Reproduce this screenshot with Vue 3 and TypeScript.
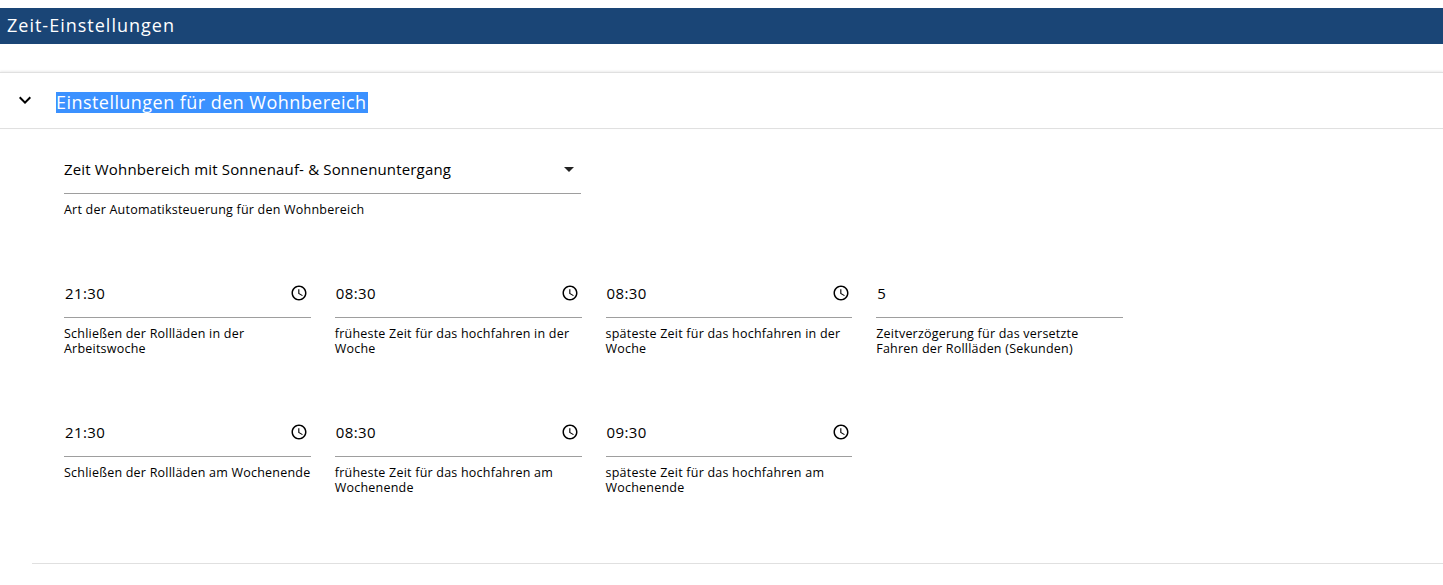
<script setup lang="ts">
interface Field { value: string; label: string; clock: boolean }
const rows: Field[][] = [
  [
    { value: '21:30', label: 'Schließen der Rollläden in der Arbeitswoche', clock: true },
    { value: '08:30', label: 'früheste Zeit für das hochfahren in der Woche', clock: true },
    { value: '08:30', label: 'späteste Zeit für das hochfahren in der Woche', clock: true },
    { value: '5', label: 'Zeitverzögerung für das versetzte Fahren der Rollläden (Sekunden)', clock: false },
  ],
  [
    { value: '21:30', label: 'Schließen der Rollläden am Wochenende', clock: true },
    { value: '08:30', label: 'früheste Zeit für das hochfahren am Wochenende', clock: true },
    { value: '09:30', label: 'späteste Zeit für das hochfahren am Wochenende', clock: true },
  ],
]
</script>

<template>
  <div class="page">
    <h1 class="title">Zeit-Einstellungen</h1>
    <section class="panel">
      <div class="panel-head">
        <svg class="chevron" width="24" height="24" viewBox="0 0 24 24" aria-hidden="true">
          <path d="M16.59 8.59 12 13.17 7.41 8.59 6 10l6 6 6-6z" fill="#000" />
        </svg>
        <span class="panel-title">Einstellungen für den Wohnbereich</span>
      </div>
      <div class="panel-body">
        <div class="select-field">
          <div class="select-value">
            <span>Zeit Wohnbereich mit Sonnenauf- &amp; Sonnenuntergang</span>
            <i class="arrow"></i>
          </div>
          <div class="hint">Art der Automatiksteuerung für den Wohnbereich</div>
        </div>
        <div v-for="(row, r) in rows" :key="r" class="grid">
          <div v-for="(f, i) in row" :key="i" class="field">
            <div class="field-value">
              <span>{{ f.value }}</span>
              <svg v-if="f.clock" class="clock" width="18" height="18" viewBox="0 0 24 24" aria-hidden="true">
                <path fill="#000" d="M11.99 2C6.47 2 2 6.48 2 12s4.47 10 9.99 10C17.52 22 22 17.52 22 12S17.52 2 11.99 2zM12 20c-4.42 0-8-3.58-8-8s3.58-8 8-8 8 3.58 8 8-3.58 8-8 8z" />
                <path fill="#000" d="M12.5 7H11v6l5.25 3.15.75-1.23-4.5-2.67z" />
              </svg>
            </div>
            <div class="hint">{{ f.label }}</div>
          </div>
        </div>
      </div>
    </section>
    <div class="bottom-rule"></div>
  </div>
</template>

<style>
html, body { margin: 0; background: #fff; overflow: hidden; }
</style>

<style scoped>
.page {
  height: 585px;
  padding-top: 8px;
  box-sizing: border-box;
  font-family: "Open Sans", "Noto Sans", sans-serif;
  color: #000;
}
.title {
  margin: 0;
  height: 36px;
  padding-left: 7px;
  background: #1a4576;
  color: #fff;
  font-size: 18px;
  font-weight: 400;
  line-height: 35px;
  letter-spacing: 1px;
}
.panel { margin-top: 28px; }
.panel-head {
  display: flex;
  align-items: center;
  height: 57px;
  box-sizing: border-box;
  border-top: 1px solid #e0e0e0;
  border-bottom: 1px solid #e0e0e0;
  box-shadow: 0 -1px 2px rgba(0, 0, 0, 0.08);
  padding-left: 12.5px;
}
.chevron { flex: none; margin-top: -1px; }
.panel-title {
  margin: 4px 0 0 19.5px;
  padding: 0 1px 0 0;
  background: #3b91ff;
  color: #fff;
  font-size: 18px;
  line-height: 21px;
  letter-spacing: 0.45px;
}
.panel-body { padding: 20px 0 0 64px; }
.select-field { width: 517px; height: 120px; }
.select-value {
  display: flex;
  align-items: center;
  justify-content: space-between;
  height: 45px;
  border-bottom: 1px solid #9e9e9e;
  font-size: 15px;
  letter-spacing: 0.16px;
  padding-bottom: 4px;
  box-sizing: border-box;
}
.arrow {
  width: 0;
  height: 0;
  margin-right: 7px;
  border-left: 5px solid transparent;
  border-right: 5px solid transparent;
  border-top: 5px solid #222;
}
.hint {
  margin-top: 8px;
  font-size: 12.5px;
  line-height: 15px;
  letter-spacing: 0.22px;
}
.grid {
  display: grid;
  grid-template-columns: repeat(4, 246.75px);
  column-gap: 24px;
  height: 139px;
}
.field-value {
  display: flex;
  align-items: center;
  justify-content: space-between;
  height: 49px;
  padding: 0 2.5px 0 1px;
  border-bottom: 1px solid #9e9e9e;
  box-sizing: border-box;
  font-size: 15px;
  letter-spacing: 0.4px;
}
.clock { flex: none; }
.bottom-rule {
  margin: 16px 0 0 32px;
  height: 1px;
  background: #e0e0e0;
}
</style>
